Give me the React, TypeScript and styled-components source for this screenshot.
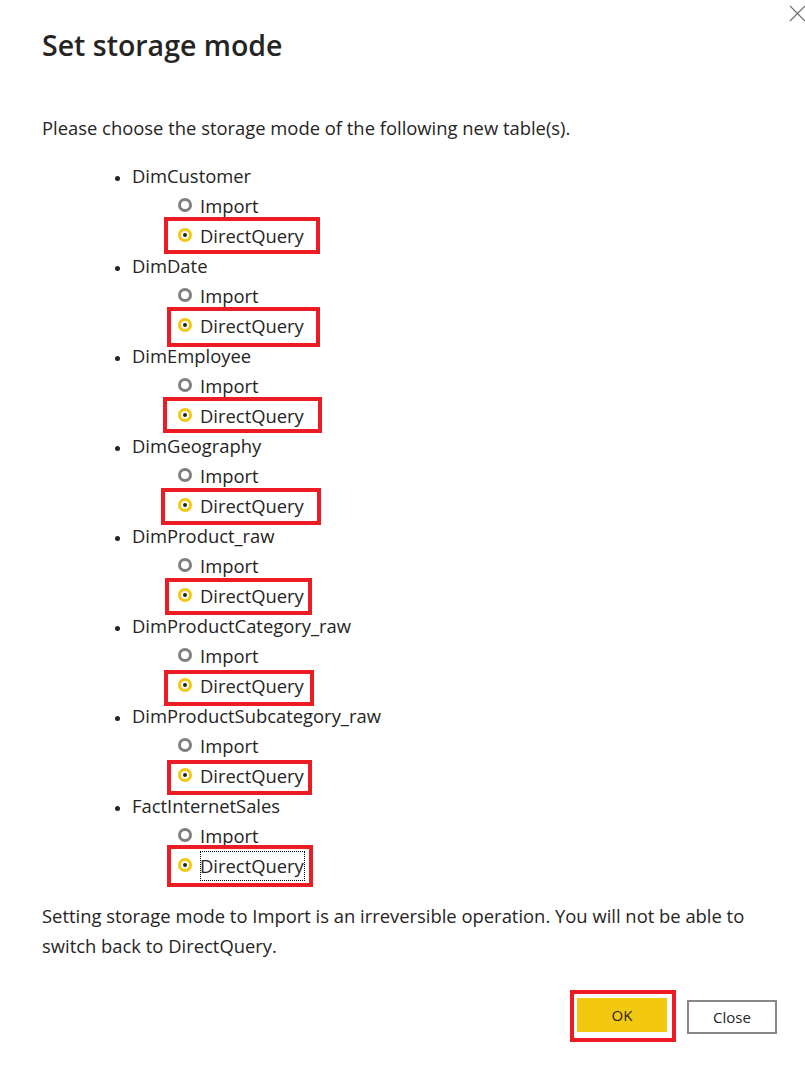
import React from "react";
import styled, { createGlobalStyle } from "styled-components";

const Global = createGlobalStyle`
  html, body { margin: 0; padding: 0; background: #ffffff; }
  body { font-family: "Open Sans", "Noto Sans", sans-serif; color: #252423; }
`;

const Dialog = styled.div`
  position: relative;
  width: 805px;
  height: 1069px;
  box-sizing: border-box;
  padding: 27px 28px 0 42px;
  background: #ffffff;
  overflow: hidden;
`;

const CloseX = styled.button`
  position: absolute;
  top: 5px;
  left: 789px;
  width: 17px;
  height: 17px;
  padding: 0;
  border: 0;
  background: transparent;
  display: flex;
`;

const Title = styled.h1`
  margin: 0;
  font-size: 28.5px;
  line-height: 36px;
  font-weight: 600;
  color: #252423;
`;

const Text = styled.p<{ $top: number }>`
  margin: ${(p) => p.$top}px 0 0 0;
  font-size: 18.4px;
  line-height: 30px;
  color: #252423;
`;

const List = styled.ul`
  margin: 18px 0 0 0;
  padding: 0 0 0 90px;
  list-style: disc;
`;

const Item = styled.li`
  font-size: 18.4px;
  line-height: 30px;
  color: #252423;
  &::marker { font-size: 15px; }
`;

const Options = styled.div`
  display: flex;
  flex-direction: column;
  margin-left: 46px;
`;

const OptionRow = styled.label`
  position: relative;
  display: flex;
  align-items: center;
  gap: 8px;
  height: 30px;
`;

const Radio = styled.span<{ $on?: boolean }>`
  box-sizing: border-box;
  width: 14px;
  height: 14px;
  border-radius: 50%;
  border: 3px solid ${(p) => (p.$on ? "#f2c811" : "#7f7f7f")};
  display: flex;
  align-items: center;
  justify-content: center;
  margin-top: -3px;
  &::after {
    content: "";
    display: ${(p) => (p.$on ? "block" : "none")};
    width: 4px;
    height: 4px;
    border-radius: 50%;
    background: #252423;
  }
`;

const OptionLabel = styled.span<{ $focus?: boolean }>`
  outline: ${(p) => (p.$focus ? "1px dotted #000" : "none")};
  outline-offset: -1px;
  padding: 0 1px 0 0;
`;

const Highlight = styled.span`
  position: absolute;
  box-sizing: border-box;
  border: 4px solid #ed1c24;
  pointer-events: none;
`;

const Footer = styled.div`
  display: flex;
  justify-content: flex-end;
  align-items: center;
  gap: 11px;
  margin-top: 29px;
`;

const HighlightWrap = styled.div`
  border: 4px solid #ed1c24;
  padding: 4px 5px 6px 3px;
  display: flex;
`;

const Button = styled.button<{ $primary?: boolean }>`
  box-sizing: border-box;
  width: 90px;
  height: 34px;
  font-family: "Open Sans", "Noto Sans", sans-serif;
  font-size: 15px;
  color: #252423;
  background: ${(p) => (p.$primary ? "#f2c811" : "#ffffff")};
  border: ${(p) => (p.$primary ? "none" : "2px solid #8a8886")};
  padding: 0;
  margin-top: ${(p) => (p.$primary ? "0" : "1px")};
`;

type Box = { l: number; t: number; w: number; h: number };

const tables: { name: string; box: Box }[] = [
  { name: "DimCustomer", box: { l: -14, t: -4, w: 156, h: 37 } },
  { name: "DimDate", box: { l: -11, t: -4, w: 153, h: 40 } },
  { name: "DimEmployee", box: { l: -15, t: -4, w: 159, h: 36 } },
  { name: "DimGeography", box: { l: -17, t: -3, w: 160, h: 37 } },
  { name: "DimProduct_raw", box: { l: -13, t: -3, w: 147, h: 37 } },
  { name: "DimProductCategory_raw", box: { l: -14, t: -1, w: 150, h: 36 } },
  { name: "DimProductSubcategory_raw", box: { l: -11, t: -1, w: 145, h: 35 } },
  { name: "FactInternetSales", box: { l: -11, t: -6, w: 146, h: 42 } },
];

export default function App() {
  return (
    <>
      <Global />
      <Dialog>
        <CloseX aria-label="Close">
          <svg width="17" height="17" viewBox="0 0 17 17">
            <path d="M1 1 L16 16 M16 1 L1 16" stroke="#6e6e6e" strokeWidth="1.2" fill="none" />
          </svg>
        </CloseX>
        <Title>Set storage mode</Title>
        <Text $top={50}>Please choose the storage mode of the following new table(s).</Text>
        <List>
          {tables.map((t, i) => (
            <Item key={t.name}>
              {t.name}
              <Options>
                <OptionRow>
                  <Radio />
                  <OptionLabel>Import</OptionLabel>
                </OptionRow>
                <OptionRow>
                  <Radio $on />
                  <OptionLabel $focus={i === tables.length - 1}>DirectQuery</OptionLabel>
                  <Highlight
                    style={{ left: t.box.l, top: t.box.t, width: t.box.w, height: t.box.h }}
                  />
                </OptionRow>
              </Options>
            </Item>
          ))}
        </List>
        <Text $top={20}>
          Setting storage mode to Import is an irreversible operation. You will not be able to
          switch back to DirectQuery.
        </Text>
        <Footer>
          <HighlightWrap>
            <Button $primary>OK</Button>
          </HighlightWrap>
          <Button>Close</Button>
        </Footer>
      </Dialog>
    </>
  );
}
